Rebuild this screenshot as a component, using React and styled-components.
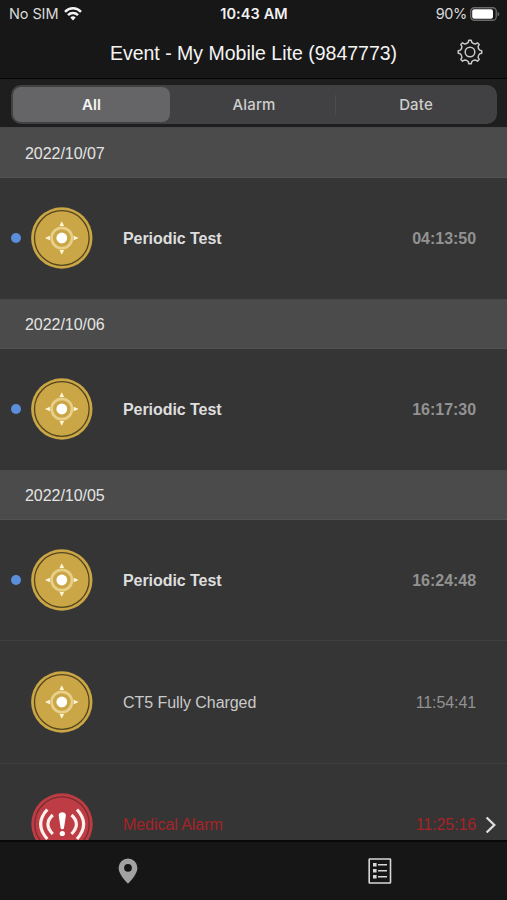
import React from 'react';
import styled, { createGlobalStyle } from 'styled-components';

const GlobalStyle = createGlobalStyle`
  * { box-sizing: border-box; }
  body {
    margin: 0;
    background: #171717;
    overflow: hidden;
    font-family: "Liberation Sans", Arial, sans-serif;
  }
  svg { display: block; flex: none; }
`;

const Screen = styled.main`
  width: 507px;
  height: 900px;
  display: flex;
  flex-direction: column;
  background: #171717;
  overflow: hidden;
`;

const StatusBar = styled.header`
  height: 28px;
  flex: none;
  display: grid;
  grid-template-columns: 1fr auto 1fr;
  align-items: center;
  padding: 0 7px 0 9px;
  font: 400 14.5px/28px Inter, sans-serif;
  color: #dadada;
`;

const StatusGroup = styled.div`
  display: flex;
  align-items: center;
  justify-content: ${(p) => (p.$end ? 'flex-end' : 'flex-start')};
  gap: ${(p) => (p.$end ? 3 : 6)}px;
  letter-spacing: ${(p) => (p.$end ? -0.35 : -0.1)}px;
`;

const Clock = styled.time`
  margin-right: 1px;
  font-weight: 600;
  color: #f2f2f2;
  letter-spacing: 0.12px;
`;

const NavBar = styled.div`
  height: 51px;
  flex: none;
  display: grid;
  grid-template-columns: 74px 1fr 74px;
  align-items: center;
  justify-items: center;
  border-bottom: 1px solid #050505;
`;

const Title = styled.h1`
  margin: 0;
  font-size: 19.5px;
  font-weight: 400;
  line-height: 24px;
  color: #f4f4f4;
  white-space: nowrap;
`;

const IconButton = styled.button`
  border: 0;
  padding: 0;
  background: none;
  color: ${(p) => p.$color || '#c8c8c8'};
`;

const SettingsButton = styled(IconButton)`
  margin-bottom: 2px;
`;

const FilterBar = styled.div`
  height: 48px;
  flex: none;
  padding: 6px 10px 3px 11px;
  background: #1e1e1e;
`;

const Segments = styled.div`
  height: 39px;
  display: grid;
  grid-template-columns: 157px 1fr 160px;
  padding: 2px;
  border-radius: 10px;
  background: #414143;
`;

const Segment = styled.button`
  border: 0;
  padding: 0;
  border-radius: 8px;
  background: ${(p) => (p.$active ? '#656567' : 'transparent')};
  color: ${(p) => (p.$active ? '#f5f5f5' : '#cecece')};
  font: ${(p) => (p.$active ? 600 : 500)} 15px/35px Inter, sans-serif;
  letter-spacing: ${(p) => (p.$active ? 0 : 0.15)}px;
`;

const MiddleSegment = styled(Segment)`
  padding-left: 3px;
`;

const DividedSegment = styled(Segment)`
  display: flex;
  align-items: center;
  border-radius: 0;

  &::before {
    content: '';
    width: 1px;
    height: 20px;
    background: #4d4d4f;
  }
`;

const SegmentLabel = styled.span`
  flex: 1;
  padding-left: 1px;
`;

const EventList = styled.section`
  flex: 1;
  min-height: 0;
  overflow: hidden;
  background: #353535;
`;

const DateHeader = styled.h2`
  margin: 0;
  height: 50px;
  padding: 0 25px;
  border-top: 1px solid #484848;
  border-bottom: 1px solid #525252;
  background: #4b4b4b;
  color: #e4e4e4;
  font-size: 16px;
  font-weight: 400;
  line-height: 49px;
  letter-spacing: -0.05px;
`;

const FirstDateHeader = styled(DateHeader)`
  height: 51px;
  padding-top: 1px;
`;

const EventRow = styled.article`
  height: ${(p) => p.$height || 121}px;
  display: grid;
  grid-template-columns: 31px 92px 1fr auto 31px;
  align-items: center;
  border-bottom: ${(p) => (p.$divided ? '1px solid #404040' : '0')};
`;

const UnreadDot = styled.i`
  width: 10px;
  height: 10px;
  margin: 0 0 1px 11px;
  border-radius: 50%;
  background: ${(p) => (p.$unread ? '#5b8edb' : 'transparent')};
`;

const EventBadge = styled.span`
  padding-bottom: 1px;
`;

const EventName = styled.span`
  padding-top: 1px;
  font-size: 16px;
  font-weight: ${(p) => (p.$unread ? 700 : 400)};
  letter-spacing: -0.06px;
  color: ${(p) => (p.$alarm ? '#a82327' : p.$unread ? '#dedede' : '#cacaca')};
`;

const EventTime = styled.time`
  padding-top: 1px;
  font-size: 16px;
  font-weight: ${(p) => (p.$unread ? 700 : 400)};
  letter-spacing: ${(p) => (p.$unread ? -0.04 : -0.1)}px;
  color: ${(p) => (p.$alarm ? '#a82327' : '#929292')};
`;

const TabBar = styled.nav`
  height: 60px;
  flex: none;
  display: grid;
  grid-template-columns: 255px 250px;
  align-items: center;
  justify-items: center;
  border-top: 2px solid #090909;
  background: #161616;
`;

const WifiIcon = () => (
  <svg width="18" height="14" viewBox="0 0 18 14" fill="none" stroke="#f4f4f4" strokeWidth="2.5">
    <path d="M1 4.8C5.5 .2 12.5 .2 17 4.8" />
    <path d="M4 8.2c2.8-2.8 7.2-2.8 10 0" />
    <path d="M6.3 10.6a3.9 3.9 0 0 1 5.4 0L9 13.5z" fill="#f4f4f4" stroke="none" />
  </svg>
);

const BatteryIcon = () => (
  <svg width="30" height="14" viewBox="0 0 30 14">
    <rect x=".75" y=".75" width="25.5" height="12.5" rx="3.5" fill="none" stroke="#6a6a6a" strokeWidth="1.3" />
    <rect x="2.2" y="2.2" width="20.8" height="9.6" rx="2" fill="#fff" />
    <path d="M27.6 4.7c2.2.8 2.2 3.8 0 4.6z" fill="#6a6a6a" />
  </svg>
);

const GEAR_TEETH = 8;
const gearPath = Array.from({ length: GEAR_TEETH }, (_, i) => {
  const at = (radius, degrees) => {
    const a = ((i * 45 + degrees) * Math.PI) / 180;
    return `${(13 + radius * Math.sin(a)).toFixed(2)} ${(13 - radius * Math.cos(a)).toFixed(2)}`;
  };
  return `${i ? 'L' : 'M'}${at(9.9, -10)}L${at(11.8, -6)}L${at(11.8, 6)}L${at(9.9, 10)}Q${at(8.6, 22.5)} ${at(9.9, 35)}`;
}).join('') + 'Z';

const GearIcon = () => (
  <svg width="26" height="26" viewBox="0 0 26 26" fill="none" stroke="currentColor" strokeWidth="1.5" strokeLinejoin="round">
    <path d={gearPath} />
    <circle cx="13" cy="13" r="4.8" />
  </svg>
);

const TestIcon = () => (
  <svg width="62" height="62" viewBox="0 0 62 62">
    <circle cx="30.8" cy="31" r="30.7" fill="#caa646" />
    <circle cx="30.8" cy="31" r="27.3" fill="none" stroke="#54461e" strokeWidth="1.3" />
    <circle cx="30.8" cy="31" r="10.2" fill="none" stroke="#e8d08a" strokeWidth="2.7" />
    <circle cx="30.8" cy="31" r="5.4" fill="#fff" />
    <path d="M30.8 14.2l2.3 4.9h-4.6zM30.8 47.8l2.3-4.9h-4.6zM14 31l4.9-2.3v4.6zM47.6 31l-4.9-2.3v4.6z" fill="#fff5d9" />
  </svg>
);

const AlarmIcon = () => (
  <svg width="62" height="62" viewBox="0 0 62 62">
    <circle cx="31" cy="31" r="30.7" fill="#be3c44" />
    <circle cx="31" cy="31" r="27.2" fill="none" stroke="#782e32" strokeWidth="1.3" />
    <g fill="none" stroke="#fff0ed" strokeWidth="3.2">
      <path d="M16.3 16.5Q3 31 16.3 46M46 16.5Q59.3 31 46 46" />
      <path d="M21.8 22Q12 31 21.8 41M40.5 22Q50.3 31 40.5 41" />
    </g>
    <path d="M27.7 22.6c0-4.4 7.2-4.4 7.2 0l-1.9 12.4c-.2 1.7-3.2 1.7-3.4 0z" fill="#fff" />
    <circle cx="31.3" cy="40.5" r="2.6" fill="#fff" />
  </svg>
);

const ChevronIcon = () => (
  <svg width="31" height="18" viewBox="0 0 31 18" fill="none" stroke="#dedede" strokeWidth="2.3">
    <path d="M10.6 1.5L18.3 9l-7.7 7.5" />
  </svg>
);

const PinIcon = () => (
  <svg width="20" height="26" viewBox="0 0 20 26">
    <path fillRule="evenodd" fill="currentColor" d="M10 .5a9.4 9.4 0 0 0-9.4 9.4C.6 16.8 10 25.5 10 25.5s9.4-8.7 9.4-15.6A9.4 9.4 0 0 0 10 .5zm0 5.4a3.9 3.9 0 1 1 0 7.8 3.9 3.9 0 0 1 0-7.8z" />
  </svg>
);

const ListIcon = () => (
  <svg width="24" height="26" viewBox="0 0 24 26" fill="currentColor">
    <rect x="1.2" y="1" width="21.3" height="24" rx=".6" fill="none" stroke="currentColor" strokeWidth="1.6" />
    <path d="M5 5h3.6v3.6H5zM5 11h3.6v3.6H5zM5 17h3.6v3.6H5zM10 6h9v1.6h-9zM10 12h9v1.6h-9zM10 18h9v1.6h-9z" />
  </svg>
);

const Event = ({ name, time, unread, alarm, divided, height }) => (
  <EventRow $divided={divided} $height={height}>
    <UnreadDot $unread={unread} />
    <EventBadge>{alarm ? <AlarmIcon /> : <TestIcon />}</EventBadge>
    <EventName $unread={unread} $alarm={alarm}>{name}</EventName>
    <EventTime $unread={unread} $alarm={alarm}>{time}</EventTime>
    {alarm && <ChevronIcon />}
  </EventRow>
);

export default function App() {
  return (
    <>
      <GlobalStyle />
      <Screen>
        <StatusBar>
          <StatusGroup>No SIM <WifiIcon /></StatusGroup>
          <Clock>10:43 AM</Clock>
          <StatusGroup $end>90% <BatteryIcon /></StatusGroup>
        </StatusBar>
        <NavBar>
          <span />
          <Title>Event - My Mobile Lite (9847773)</Title>
          <SettingsButton aria-label="Settings"><GearIcon /></SettingsButton>
        </NavBar>
        <FilterBar>
          <Segments>
            <Segment $active>All</Segment>
            <MiddleSegment>Alarm</MiddleSegment>
            <DividedSegment><SegmentLabel>Date</SegmentLabel></DividedSegment>
          </Segments>
        </FilterBar>
        <EventList>
          <FirstDateHeader>2022/10/07</FirstDateHeader>
          <Event name="Periodic Test" time="04:13:50" unread />
          <DateHeader>2022/10/06</DateHeader>
          <Event name="Periodic Test" time="16:17:30" unread />
          <DateHeader>2022/10/05</DateHeader>
          <Event name="Periodic Test" time="16:24:48" unread divided height={121} />
          <Event name="CT5 Fully Charged" time="11:54:41" divided height={123} />
          <Event name="Medical Alarm" time="11:25:16" alarm divided height={122} />
        </EventList>
        <TabBar>
          <IconButton $color="#a2a2a2" aria-label="Map"><PinIcon /></IconButton>
          <IconButton $color="#d8d8d8" aria-label="Events"><ListIcon /></IconButton>
        </TabBar>
      </Screen>
    </>
  );
}
